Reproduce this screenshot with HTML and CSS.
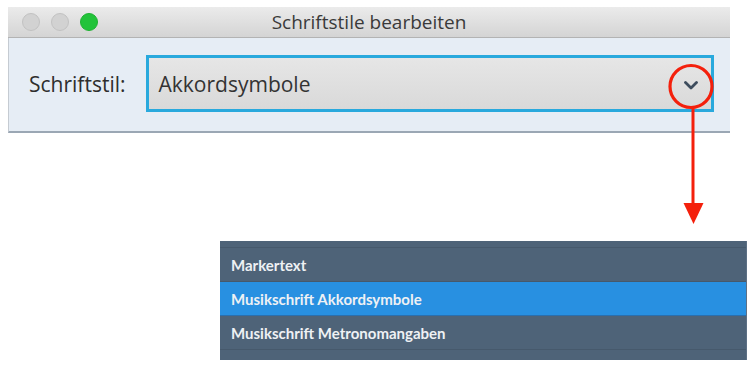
FILE: index.html
```html
<!DOCTYPE html>
<html lang="de">
<head>
  <meta charset="UTF-8" />
  <title>Schriftstile bearbeiten</title>
  <link rel="stylesheet" href="styles.css">
</head>
<body>
  <div class="window">
    <div class="titlebar">
      <div class="lights">
        <span class="light"></span>
        <span class="light"></span>
        <span class="light green"></span>
      </div>
      <div class="title">Schriftstile bearbeiten</div>
    </div>
    <div class="content">
      <label class="label">Schriftstil:</label>
      <div class="select">
        <span>Akkordsymbole</span>
        <svg class="chevron" width="14" height="9" viewBox="0 0 14 9">
          <path d="M1.5 1.5 L7 7 L12.5 1.5" fill="none" stroke="#3d4c5d" stroke-width="2.8" stroke-linecap="round" stroke-linejoin="round"/>
        </svg>
      </div>
    </div>
  </div>

  <div class="dropdown">
    <div class="row partial"></div>
    <div class="row">Markertext</div>
    <div class="row active">Musikschrift Akkordsymbole</div>
    <div class="row">Musikschrift Metronomangaben</div>
    <div class="row partial last"></div>
  </div>

  <!-- annotation -->
  <svg class="callout" width="754" height="368" viewBox="0 0 754 368">
    <circle cx="691" cy="86.5" r="21" fill="none" stroke="#f4200c" stroke-width="3.2"/>
    <line x1="693" y1="108" x2="693" y2="206" stroke="#f4200c" stroke-width="3"/>
    <polygon points="683.5,203 703.5,203 693.5,224" fill="#f4200c"/>
  </svg>
</body>
</html>
```

FILE: styles.css
```css
* {
  margin: 0;
  padding: 0;
  box-sizing: border-box;
}
body {
  background: #fff;
  font-family: 'Open Sans', sans-serif;
  position: relative;
  width: 754px;
  height: 368px;
  overflow: hidden;
}
.window {
  margin: 7px 0 0 8px;
  width: 722px;
}
.titlebar {
  height: 31px;
  background: linear-gradient(#ebebeb, #d4d4d4);
  border-bottom: 1px solid #b3b3b3;
  position: relative;
  display: flex;
  align-items: center;
}
.lights {
  display: flex;
  gap: 11px;
  padding-left: 14px;
}
.light {
  width: 18px;
  height: 18px;
  border-radius: 50%;
  background: #d2d2d2;
  border: 1px solid #c2c2c2;
}
.light.green {
  background: #22c33a;
  border-color: #1eb232;
}
.title {
  position: absolute;
  left: 0;
  right: 0;
  text-align: center;
  font-size: 19px;
  color: #3a3a3a;
}
.content {
  background: #e6edf5;
  border-left: 1px solid #c5cbd2;
  border-bottom: 2px solid #9ba7b4;
  height: 95px;
  display: flex;
  align-items: center;
  padding: 0 16px 2px 20px;
  gap: 20px;
}
.label {
  font-size: 21px;
  color: #2e2e2e;
}
.select {
  flex: none;
  width: 568px;
  height: 57px;
  border: 3px solid #29a9dd;
  background: linear-gradient(#e6e6e6, #d9d9d9);
  display: flex;
  align-items: center;
  justify-content: space-between;
  padding: 0 13px 0 10px;
  font-size: 21px;
  color: #333;
}
.chevron {
  flex: none;
  margin-top: 4px;
}
.dropdown {
  margin: 108px 0 0 220px;
  width: 527px;
  background: #4e6378;
  border-right: 1px solid #5d7085;
}
.row {
  height: 34px;
  padding-left: 11px;
  display: flex;
  align-items: center;
  font-family: 'Lato', sans-serif;
  font-weight: bold;
  font-size: 15px;
  color: #eef1f4;
  border-bottom: 1px solid #46596c;
}
.row.partial {
  height: 7px;
}
.row.last {
  height: 10px;
  border-bottom: none;
}
.row.active {
  background: #2890e1;
  border-bottom-color: #2a6fae;
}
.callout {
  position: absolute;
  left: 0;
  top: 0;
}
```
